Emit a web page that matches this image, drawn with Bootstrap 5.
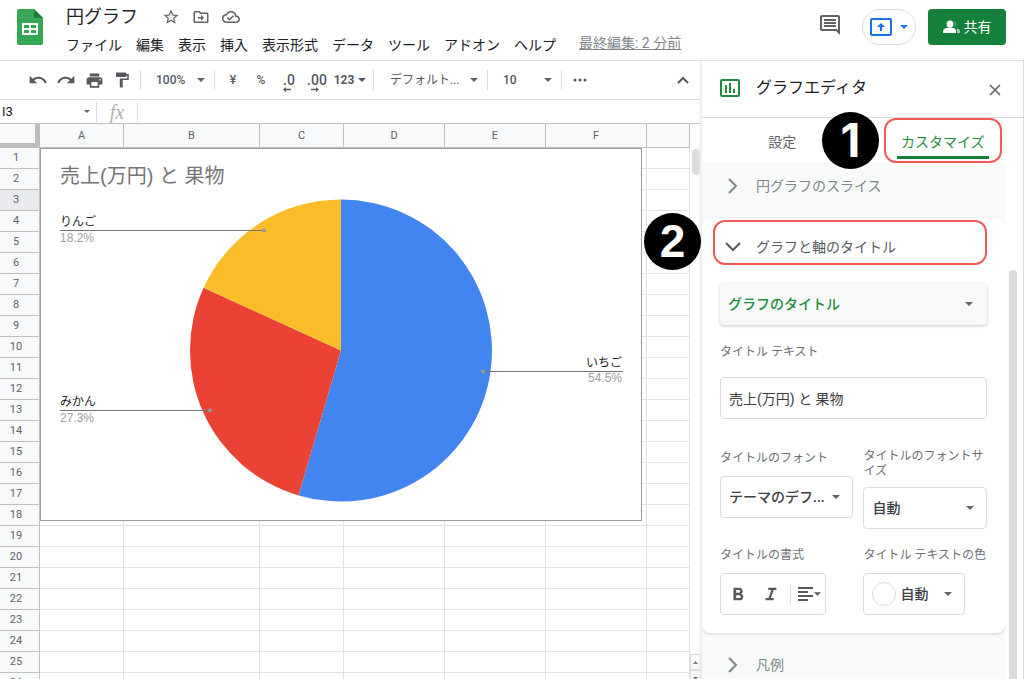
<!DOCTYPE html>
<html lang="ja">
<head>
<meta charset="utf-8">
<meta name="viewport" content="width=device-width, initial-scale=1">
<title>円グラフ</title>
<link href="https://cdn.jsdelivr.net/npm/bootstrap@5.3.0/dist/css/bootstrap.min.css" rel="stylesheet">
<style>
  body { font-family: Roboto, "Noto Sans CJK JP", sans-serif; font-size: 14px; line-height: 20px; color: #202124; background: #fff; }
  button, input, select { font: inherit; color: inherit; }
  svg { display: block; fill: currentColor; flex: none; }
  .plain { border: 0; background: none; padding: 0; }

  /* header */
  .app-head { border-bottom: 1px solid #dadce0; height: 61px; padding: 5px 18px 0 17px; }
  .doc-block { padding-left: 23px; }
  .doc-name { font-size: 18px; line-height: 24px; }
  .tint { color: #5f6368; }
  .menu-row { gap: 14px; line-height: 24px; margin-top: 4px; }
  .edited { color: #80868b; margin-left: 9px; line-height: 20px; }
  .present { border: 1px solid #dadce0; border-radius: 18px; width: 54px; height: 36px; color: #1a73e8; }
  .share { background: #15803c; color: #fff; width: 78px; height: 36px; border-radius: 4px; font-size: 14px; }
  .share:hover { background: #126c33; color: #fff; }

  /* toolbar */
  .tools { height: 39px; padding-left: 24px; border-bottom: 1px solid #dadce0; color: #55595e; font-size: 12px; font-weight: 500; }
  .tool { width: 28px; height: 28px; }
  .tool-num { width: 38px; }
  .decimal { font-size: 14px; line-height: 14px; }
  .rule-v { width: 1px; height: 20px; background: #dadce0; margin: 0 4px; flex: none; }
  .pick { appearance: none; border: 0; padding: 0 18px 0 11px; height: 28px;
    background: url("data:image/svg+xml,%3Csvg xmlns='http://www.w3.org/2000/svg' viewBox='0 0 8 4'%3E%3Cpath fill='%235f6368' d='M0 0h8L4 4z'/%3E%3C/svg%3E") right 5px center / 8px 4px no-repeat; }
  .pick-s { width: 65px; }
  .pick-l { width: 105px; font-weight: 400; padding-left: 12px; }
  .formula { height: 24px; border-bottom: 1px solid #c0c0c0; }
  .name-box { width: 96px; font-size: 13px; padding: 0 16px 0 2px; background-position: right 6px center; background-size: 6px 3px; }
  .fx { font: italic 20px/20px "Liberation Serif", serif; color: #b0b0b0; width: 32px; text-align: center; }

  /* sheet */
  .sheet { table-layout: fixed; border-collapse: separate; border-spacing: 0; width: 100%; font-size: 11px; line-height: 12px; color: #5f6368; text-align: center; }
  .sheet th { background: #f8f9fa; font-weight: 400; border-right: 1px solid #c0c0c0; border-bottom: 1px solid #c0c0c0; padding: 0; }
  .sheet td { border-right: 1px solid #e2e3e3; border-bottom: 1px solid #e2e3e3; padding: 0; height: 21px; }
  .sheet thead th { height: 24px; }
  .sheet tbody th { padding-right: 7px; }
  .sheet thead th:first-child { border-right: 5px solid #bdbdbd; border-bottom: 5px solid #bdbdbd; }
  .sheet .picked { background: #e8eaed; }
  .chart-box { position: absolute; left: 40px; top: 24px; width: 602px; height: 373px; background: #fff; border: 1px solid #9e9e9e; }
  .chart-box text { font-family: "Liberation Sans", "Noto Sans CJK JP", sans-serif; font-size: 12px; }
  .v-scroll { width: 11px; background: #fff; padding-top: 25px; }
  .v-thumb { width: 8px; height: 26px; border-radius: 4px; background: #dadce0; margin-left: 2px; }
  .v-arrows { height: 25px; color: #777; }
  .v-arrows button { height: 16px; border: 1px solid #dadce0; background: #f8f9fa; }

  /* chart editor */
  .editor { width: 323px; border-left: 1px solid #eceeef; border-right: 1px solid #dadce0; box-shadow: -1px 0 3px #e8eaed; background: #fff; z-index: 2; }
  .editor-head { height: 57px; border-bottom: 1px solid #dadce0; padding: 0 18px 2px 18px; font-size: 16px; }
  .tab-row { height: 44px; z-index: 1; }
  .tab-row > div { flex: 1 1 0; }
  .tab-on { color: #1e8e3e; border: 2px solid #f05a5a; border-radius: 12px; width: 118px; height: 45px; }
  .tab-on span { display: block; width: 92px; margin: 0 auto; padding: 10px 0 4px; border-bottom: 3px solid #15803c; line-height: 20px; }
  .panes { background: #f8f9f9; }
  .section-btn { height: 56px; padding: 0 0 8px 26px; color: #80868b; gap: 18px; width: 100%; }
  .pane { background: #fff; border-radius: 8px; box-shadow: 0 1px 3px #cfd2d5; padding: 2px 18px 18px; }
  .pane-title { border: 2px solid #f05a5a; border-radius: 12px; height: 45px; margin-left: -7px; padding: 8px 0 0 10px; gap: 15px; color: #55595e; width: calc(100% + 7px); }
  .big-pick, .field-box { height: 42px; border-radius: 4px; width: 100%; padding: 0 8px; }
  .big-pick { appearance: none; color: #1e8e3e; font-weight: 500; background-color: #f8f9f9; border: 0; box-shadow: 0 1px 3px #c4c7ca; background-position: right 14px center; padding: 0 30px 0 8px; margin-top: 18px; }
  .field-box { border: 1px solid #dadce0; background-color: #fff; color: #3c4043; }
  select.field-box { font-weight: 500; padding: 0 24px 0 8px; background-position: right 12px center; }
  .cap { font-size: 12px; line-height: 15px; min-height: 19px; color: #6b7075; display: flex; align-items: center; margin-bottom: 8px; }
  .cap-lone { margin: 18px 0 15px; }
  .field-grid { display: grid; grid-template-columns: 134fr 124fr; column-gap: 10px; row-gap: 17px; margin-top: 30px; }
  .fmt { width: 106px; color: #55595e; padding: 0 4px 0 6px; }
  .colour { width: 102px; font-weight: 500; }
  .swatch { width: 24px; height: 24px; border: 1px solid #dadce0; border-radius: 50%; }
  .gutter { width: 18px; padding-top: 108px; background: #fff; }
  .gutter div { width: 8px; margin-left: 4px; background: #dadce0; border-radius: 4px 4px 0 0; }

  /* numbered markers lying over the window */
  .step { position: absolute; width: 57px; height: 57px; border-radius: 50%; background: #000; color: #fff; font: bold 46px/57px "Liberation Sans", sans-serif; text-align: center; z-index: 5; }
  .step-1 { right: 145px; top: 51px; font-family: Inter, sans-serif; }
  .step-2 { right: 323px; top: 152px; }
</style>
</head>
<body class="vh-100 overflow-hidden d-flex flex-column">

<header class="app-head d-flex flex-shrink-0">
  <svg width="26" height="36" viewBox="0 0 26 36" class="mt-1" aria-hidden="true">
    <path fill="#34a853" d="M2 0h15l9 9v25a2 2 0 0 1-2 2H2a2 2 0 0 1-2-2V2a2 2 0 0 1 2-2z"/><path fill="#188038" d="M17 0l9 9h-9z"/>
    <path fill="#fff" fill-rule="evenodd" d="M5 14h16v12H5zm2 2v3h5v-3zm7 0v3h5v-3zm-7 5v3h5v-3zm7 0v3h5v-3z"/>
  </svg>
  <div class="doc-block flex-grow-1 text-nowrap">
    <div class="d-flex align-items-center tint">
      <span class="doc-name text-dark me-4">円グラフ</span>
      <button class="plain" aria-label="スター"><svg width="18" height="18" viewBox="0 0 24 24"><path d="M22 9.24l-7.19-.62L12 2 9.19 8.63 2 9.24l5.46 4.73L5.82 21 12 17.27 18.18 21l-1.63-7.03L22 9.24zM12 15.4l-3.76 2.27 1-4.28-3.32-2.88 4.38-.38L12 6.1l1.71 4.04 4.38.38-3.32 2.88 1 4.28L12 15.4z"/></svg></button>
      <button class="plain ms-2 ps-1" aria-label="移動"><svg width="18" height="18" viewBox="0 0 24 24"><path d="M20 6h-8l-2-2H4a2 2 0 0 0-2 2v12c0 1.100.9 2 2 2h16a2 2 0 0 0 2-2V8a2 2 0 0 0-2-2zm0 12H4V6h5.200l2 2H20zM12 9v3H8v2h4v3l4-4z"/></svg></button>
      <button class="plain ms-2 ps-1" aria-label="保存状態"><svg width="18" height="18" viewBox="0 0 24 24"><path d="M19.350 10.040A7.490 7.490 0 0 0 12 4C9.110 4 6.600 5.640 5.350 8.040A5.994 5.994 0 0 0 0 14c0 3.310 2.690 6 6 6h13c2.760 0 5-2.240 5-5 0-2.640-2.050-4.780-4.650-4.960zM19 18H6c-2.210 0-4-1.790-4-4 0-2.050 1.530-3.760 3.560-3.970l1.070-.11.5-.95A5.469 5.469 0 0 1 12 6c2.620 0 4.880 1.860 5.390 4.430l.3 1.500 1.530.11A2.980 2.980 0 0 1 22 15c0 1.650-1.350 3-3 3zm-9-3.820l-2.090-2.090L6.500 13.500 10 17l6.010-6.010-1.410-1.410z"/></svg></button>
    </div>
    <nav class="menu-row d-flex">
      <button class="plain">ファイル</button><button class="plain">編集</button><button class="plain">表示</button><button class="plain">挿入</button><button class="plain">表示形式</button><button class="plain">データ</button><button class="plain">ツール</button><button class="plain">アドオン</button><button class="plain">ヘルプ</button>
      <a href="#" class="edited">最終編集: 2 分前</a>
    </nav>
  </div>
  <div class="d-flex pt-1 align-items-start">
    <button class="plain tint pt-1 me-3 pe-1" aria-label="コメント"><svg width="24" height="24" viewBox="0 0 24 24"><path d="M21.990 4c0-1.100-.89-2-1.990-2H4c-1.100 0-2 .9-2 2v12c0 1.100.9 2 2 2h14l4 4-.01-18zM20 4v13.170L18.830 16H4V4h16zM6 12h12v2H6zm0-3h12v2H6zm0-3h12v2H6z"/></svg></button>
    <button class="plain present d-flex align-items-center justify-content-center gap-2 me-2" aria-label="画面を共有"><svg width="22" height="18" viewBox="0 0 22 18"><path fill-rule="evenodd" d="M2 0h18a2 2 0 0 1 2 2v14a2 2 0 0 1-2 2H2a2 2 0 0 1-2-2V2a2 2 0 0 1 2-2zm0 2v14h18V2zm8 11V9H7l4-4 4 4h-3v4z"/></svg><svg width="8" height="4" viewBox="0 0 8 4"><path d="M0 0h8L4 4z"/></svg></button>
    <button class="btn share p-0 ms-1 d-flex align-items-center justify-content-center gap-1"><svg width="17" height="14" viewBox="0 0 17 14"><circle cx="7" cy="4" r="3.500"/><path d="M0 13v-2c0-2.500 4-3.500 7-3.500s6 1 6 3.500v2z"/><path opacity=".6" d="M11 1a3.500 3.500 0 0 1 0 6 5 5 0 0 0 0-6zM14 13v-2c0-1-.4-2-1-2.700 2 .5 4 1.200 4 2.700v2z"/></svg>共有</button>
  </div>
</header>

<div class="d-flex flex-grow-1 position-relative" style="min-height:0">
  <main class="flex-grow-1 d-flex flex-column" style="min-width:0">
    <div class="tools d-flex flex-shrink-0 align-items-center text-nowrap">
      <button class="plain tool d-flex align-items-center justify-content-center" aria-label="元に戻す"><svg width="20" height="20" viewBox="0 0 24 24"><path d="M12.500 8c-2.650 0-5.050.99-6.900 2.600L2 7v9h9l-3.620-3.620c1.390-1.160 3.160-1.880 5.120-1.880 3.540 0 6.550 2.310 7.600 5.500l2.370-.78C21.080 11.030 17.150 8 12.500 8z"/></svg></button>
      <button class="plain tool d-flex align-items-center justify-content-center" aria-label="やり直す"><svg width="20" height="20" viewBox="0 0 24 24"><path d="M18.400 10.600C16.550 8.990 14.150 8 11.500 8c-4.650 0-8.580 3.030-9.960 7.220L3.900 16c1.050-3.190 4.050-5.500 7.600-5.500 1.950 0 3.730.72 5.120 1.880L13 16h9V7l-3.600 3.600z"/></svg></button>
      <button class="plain tool d-flex align-items-center justify-content-center" aria-label="印刷"><svg width="19" height="19" viewBox="0 0 24 24"><path d="M19 8H5c-1.660 0-3 1.340-3 3v6h4v4h12v-4h4v-6c0-1.660-1.340-3-3-3zm-3 11H8v-5h8v5zm3-7c-.55 0-1-.45-1-1s.45-1 1-1 1 .45 1 1-.45 1-1 1zm-1-9H6v4h12V3z"/></svg></button>
      <button class="plain tool d-flex align-items-center justify-content-center" aria-label="書式を貼り付け"><svg width="18" height="18" viewBox="0 0 24 24"><path d="M18 4V3c0-.55-.45-1-1-1H5c-.55 0-1 .45-1 1v4c0 .55.45 1 1 1h12c.55 0 1-.45 1-1V6h1v4H9v11c0 .55.45 1 1 1h2c.55 0 1-.45 1-1v-9h8V4h-3z"/></svg></button>
      <span class="rule-v"></span>
      <select class="pick pick-s" aria-label="ズーム"><option>100%</option></select>
      <span class="rule-v"></span>
      <button class="plain tool">¥</button><button class="plain tool">%</button>
      <button class="plain tool d-flex flex-column justify-content-center pt-1" aria-label="小数点以下の桁数を減らす"><span class="decimal">.0</span><svg class="ms-2" width="8" height="5" viewBox="0 0 8 5"><path d="M0 2.500L3 0v1.700h5v1.600H3V5z"/></svg></button>
      <button class="plain tool d-flex flex-column justify-content-center pt-1" aria-label="小数点以下の桁数を増やす"><span class="decimal">.00</span><svg class="ms-2" width="8" height="5" viewBox="0 0 8 5"><path d="M8 2.500L5 0v1.700H0v1.600h5V5z"/></svg></button>
      <button class="plain tool-num d-flex align-items-center justify-content-center gap-1 fw-bold">123<svg width="8" height="4" viewBox="0 0 8 4"><path d="M0 0h8L4 4z"/></svg></button>
      <span class="rule-v"></span>
      <select class="pick pick-l" aria-label="フォント"><option>デフォルト...</option></select>
      <span class="rule-v"></span>
      <select class="pick pick-s" aria-label="フォントサイズ"><option>10</option></select>
      <span class="rule-v"></span>
      <button class="plain tool d-flex align-items-center justify-content-center" aria-label="その他"><svg width="14" height="4" viewBox="0 0 14 4"><circle cx="2" cy="2" r="1.500"/><circle cx="7" cy="2" r="1.500"/><circle cx="12" cy="2" r="1.500"/></svg></button>
      <button class="plain ms-auto me-2 px-1" aria-label="メニューを隠す"><svg width="12" height="8" viewBox="0 0 12 8"><path fill="none" stroke="currentColor" stroke-width="2" d="M1 7l5-5 5 5"/></svg></button>
    </div>
    <div class="formula d-flex flex-shrink-0 align-items-center">
      <select class="pick name-box" aria-label="名前ボックス"><option>I3</option></select>
      <span class="rule-v m-0"></span>
      <label for="fml" class="fx ms-1">fx</label>
      <span class="rule-v mx-1"></span>
      <input id="fml" class="plain flex-grow-1" type="text">
    </div>
    <div class="d-flex flex-grow-1 overflow-hidden">
      <div class="flex-grow-1 position-relative">
        <table class="sheet">
          <colgroup><col style="width:40px"><col style="width:84px"><col style="width:136px"><col style="width:84px"><col style="width:101px"><col style="width:101px"><col style="width:101px"><col></colgroup>
          <thead><tr><th></th><th>A</th><th>B</th><th>C</th><th>D</th><th>E</th><th>F</th><th></th></tr></thead>
          <tbody id="rows"></tbody>
        </table>
        <div class="chart-box">
          <svg width="600" height="371" viewBox="41 149 600 371" role="img" aria-label="売上(万円) と 果物">
            <text x="60" y="183" fill="#757575" style="font-size:20px">売上(万円) と 果物</text>
            <path fill="#4285f0" d="M341 350.500V199.500A151 151 0 1 1 298.500 495.400z"/>
            <path fill="#ea4335" d="M341 350.500L298.500 495.400A151 151 0 0 1 203.600 287.800z"/>
            <path fill="#fbbc2a" d="M341 350.500L203.600 287.800A151 151 0 0 1 341 199.500z"/>
            <g stroke="#757575"><path d="M60 230.500H264M60 410.500H210M483 371.500H623"/></g>
            <g fill="#999"><circle cx="264" cy="230.500" r="2"/><circle cx="210" cy="410.500" r="2"/><circle cx="483" cy="371.500" r="2"/></g>
            <g fill="#222"><text x="60" y="226">りんご</text><text x="60" y="406">みかん</text><text x="622" y="367" text-anchor="end">いちご</text></g>
            <g fill="#9e9e9e"><text x="60" y="242">18.2%</text><text x="60" y="422">27.3%</text><text x="622" y="382" text-anchor="end">54.5%</text></g>
          </svg>
        </div>
      </div>
      <div class="v-scroll flex-shrink-0 d-flex flex-column justify-content-between">
        <div class="v-thumb"></div>
        <div class="v-arrows">
          <button class="p-0 w-100 d-flex align-items-center justify-content-center" aria-label="上へ"><svg width="5" height="3" viewBox="0 0 5 3"><path d="M0 3h5L2.500 0z"/></svg></button>
          <button class="p-0 w-100 d-flex align-items-center justify-content-center" aria-label="下へ"><svg width="5" height="3" viewBox="0 0 5 3"><path d="M0 0h5L2.500 3z"/></svg></button>
        </div>
      </div>
    </div>
  </main>

  <aside class="editor flex-shrink-0 d-flex flex-column">
    <div class="editor-head d-flex flex-shrink-0 align-items-center">
      <svg width="20" height="20" viewBox="0 0 20 20" style="color:#1e8e3e"><path fill-rule="evenodd" d="M2 1h16a2 2 0 0 1 2 2v14a2 2 0 0 1-2 2H2a2 2 0 0 1-2-2V3a2 2 0 0 1 2-2zm0 2v14h16V3zm3 4h2v8H5zm4-2h2v10H9zm4 6h2v4h-2z"/></svg>
      <span class="ms-3">グラフエディタ</span>
      <button class="plain tint ms-auto pt-1 px-1" aria-label="閉じる"><svg width="12" height="12" viewBox="0 0 12 12"><path stroke="currentColor" stroke-width="1.600" d="M1 1l10 10M11 1L1 11"/></svg></button>
    </div>
    <div class="tab-row d-flex flex-shrink-0">
      <div class="d-flex justify-content-center"><button class="plain tint pt-1">設定</button></div>
      <div class="d-flex justify-content-center align-items-start"><button class="plain tab-on"><span>カスタマイズ</span></button></div>
    </div>
    <div class="d-flex flex-grow-1 overflow-hidden">
      <div class="panes flex-grow-1">
        <button class="plain section-btn d-flex align-items-center"><svg width="10" height="16" viewBox="0 0 10 16"><path fill="none" stroke="currentColor" stroke-width="2" d="M1 1l7 7-7 7"/></svg>円グラフのスライス</button>
        <section class="pane">
          <button class="plain pane-title d-flex align-items-center"><svg width="16" height="10" viewBox="0 0 16 10"><path fill="none" stroke="currentColor" stroke-width="2" d="M1 1l7 7 7-7"/></svg>グラフと軸のタイトル</button>
          <select class="pick big-pick" aria-label="タイトルの種類"><option>グラフのタイトル</option></select>
          <label class="cap cap-lone" for="ttl">タイトル テキスト</label>
          <input class="field-box" id="ttl" type="text" value="売上(万円) と 果物">
          <div class="field-grid">
            <div><label class="cap" for="fnt">タイトルのフォント</label><select id="fnt" class="pick field-box"><option>テーマのデフ...</option></select></div>
            <div><label class="cap" for="fsz">タイトルのフォントサイズ</label><select id="fsz" class="pick field-box"><option>自動</option></select></div>
            <div>
              <div class="cap">タイトルの書式</div>
              <div class="field-box fmt d-flex align-items-center justify-content-between">
                <button class="plain" aria-label="太字"><svg width="22" height="20" viewBox="0 0 24 22"><path d="M15.600 10.790c.97-.67 1.650-1.770 1.650-2.790 0-2.260-1.750-4-4-4H7v14h7.040c2.090 0 3.710-1.700 3.710-3.790 0-1.520-.86-2.820-2.150-3.420zM10 6.500h3c.83 0 1.500.67 1.500 1.500s-.67 1.500-1.500 1.500h-3v-3zm3.500 9H10v-3h3.500c.83 0 1.500.67 1.500 1.500s-.67 1.500-1.500 1.500z"/></svg></button>
                <button class="plain ms-2" aria-label="斜体"><svg width="22" height="20" viewBox="0 0 24 22"><path d="M9 4v2.500h3.400l-3.200 9H6V18h9v-2.500h-3.200l3.200-9H18V4z"/></svg></button>
                <span class="rule-v my-0 mx-1"></span>
                <button class="plain d-flex align-items-center" aria-label="配置"><svg width="16" height="14" viewBox="0 0 16 14"><path d="M0 0h15v2H0zm0 4h10v2H0zm0 4h15v2H0zm0 4h10v2H0z"/></svg><svg width="7" height="4" viewBox="0 0 8 4"><path d="M0 0h8L4 4z"/></svg></button>
              </div>
            </div>
            <div>
              <div class="cap text-nowrap">タイトル テキストの色</div>
              <button class="field-box colour d-flex align-items-center"><span class="swatch me-1"></span><span>自動</span><svg class="tint ms-auto me-1" width="8" height="4" viewBox="0 0 8 4"><path d="M0 0h8L4 4z"/></svg></button>
            </div>
          </div>
        </section>
        <button class="plain section-btn d-flex align-items-center pb-0 mt-1"><svg width="10" height="16" viewBox="0 0 10 16"><path fill="none" stroke="currentColor" stroke-width="2" d="M1 1l7 7-7 7"/></svg>凡例</button>
      </div>
      <div class="gutter flex-shrink-0 d-flex"><div></div></div>
    </div>
  </aside>
  <div class="step step-1">1</div>
  <div class="step step-2">2</div>
</div>

<script>
  const body = document.getElementById('rows');
  for (let r = 1; r <= 26; r++) {
    const tr = body.insertRow();
    tr.innerHTML = `<th${r === 3 ? ' class="picked"' : ''}>${r}</th>` + '<td></td>'.repeat(7);
  }
</script>
<script src="https://cdn.jsdelivr.net/npm/bootstrap@5.3.0/dist/js/bootstrap.bundle.min.js"></script>
</body>
</html>
